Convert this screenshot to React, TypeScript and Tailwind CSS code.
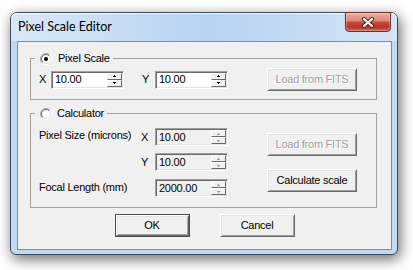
import React from "react";

const sans = "font-['Liberation_Sans',Arial,sans-serif] text-[11px] tracking-[-0.25px] leading-[13px]";

function Radio({ checked }: { checked?: boolean }) {
  return (
    <svg width="12" height="12" viewBox="0 0 12 12" className="shrink-0">
      <defs>
        <linearGradient id="rOuter" x1="0" y1="0" x2="1" y2="1">
          <stop offset="0.5" stopColor="#a0a0a0" />
          <stop offset="0.5" stopColor="#ffffff" />
        </linearGradient>
        <linearGradient id="rInner" x1="0" y1="0" x2="1" y2="1">
          <stop offset="0.5" stopColor="#696969" />
          <stop offset="0.5" stopColor="#e3e3e3" />
        </linearGradient>
      </defs>
      <circle cx="6" cy="6" r="5.5" fill="none" stroke="url(#rOuter)" />
      <circle cx="6" cy="6" r="4.5" fill="#fff" stroke="url(#rInner)" />
      {checked && <circle cx="6" cy="6" r="2" fill="#000" />}
    </svg>
  );
}

function Arrow({ up, disabled }: { up?: boolean; disabled?: boolean }) {
  const c = disabled ? "#a0a0a0" : "#000";
  return (
    <svg width="3" height="2" viewBox="0 0 3 2" shapeRendering="crispEdges">
      {up ? (
        <>
          <rect x="1" y="0" width="1" height="1" fill={c} />
          <rect x="0" y="1" width="3" height="1" fill={c} />
        </>
      ) : (
        <>
          <rect x="0" y="0" width="3" height="1" fill={c} />
          <rect x="1" y="1" width="1" height="1" fill={c} />
        </>
      )}
    </svg>
  );
}

const raised =
  "border border-t-white border-l-white border-b-[#696969] border-r-[#696969] bg-[#f0f0f0]";

function SpinBox({ value, disabled }: { value: string; disabled?: boolean }) {
  return (
    <div
      className={`w-[73px] h-[18px] shrink-0 flex p-[1px] border border-t-[#a0a0a0] border-l-[#a0a0a0] border-b-white border-r-white shadow-[inset_1px_1px_0_#696969,inset_-1px_-1px_0_#e3e3e3] ${
        disabled ? "bg-[#f0f0f0]" : "bg-white"
      }`}
    >
      <div className="flex-1 flex items-center pl-[2px] text-black">{value}</div>
      <div className="w-[15px] flex flex-col">
        <div className={`flex-1 flex items-center justify-center ${raised}`}>
          <Arrow up disabled={disabled} />
        </div>
        <div className={`flex-1 flex items-center justify-center ${raised}`}>
          <Arrow disabled={disabled} />
        </div>
      </div>
    </div>
  );
}

function Btn({
  label,
  disabled,
  def,
  w = "w-[90px]",
}: {
  label: string;
  disabled?: boolean;
  def?: boolean;
  w?: string;
}) {
  return (
    <div className={`${w} h-[23px] ${def ? "border border-[#4a4a4a]" : ""}`}>
      <div
        className={`h-full w-full flex items-center justify-center ${raised} shadow-[inset_1px_1px_0_#e3e3e3,inset_-1px_-1px_0_#a0a0a0]`}
      >
        <span className={disabled ? "text-[#a0a0a0] [text-shadow:1px_1px_0_#fff]" : "text-black"}>
          {label}
        </span>
      </div>
    </div>
  );
}

function CloseButton() {
  return (
    <div className="-mt-[1px] mr-[6px] w-[46px] h-[20px] rounded-b-[4px] border border-[#6b2b27] bg-[linear-gradient(180deg,#eaaea0_0%,#da8a7a_42%,#c74a3a_52%,#b83425_78%,#cf6550_100%)] shadow-[inset_0_0_0_1px_rgba(255,255,255,0.3)] flex items-center justify-center">
      <svg width="14" height="11" viewBox="0 0 14 11">
        <path d="M3 2 L11 9 M11 2 L3 9" stroke="#4a2624" strokeWidth="4.2" strokeLinecap="round" />
        <path d="M3 2 L11 9 M11 2 L3 9" stroke="#ffffff" strokeWidth="2.2" strokeLinecap="round" />
      </svg>
    </div>
  );
}

export default function App() {
  return (
    <div className="w-[413px] h-[270px] bg-white pt-[12px] pl-[10px] overflow-hidden">
      <div className="w-[388px] h-[243px] rounded-t-[7px] rounded-b-[6px] border border-[#3e4a59] bg-[#c1daf4] flex flex-col shadow-[2px_4px_14px_rgba(0,0,0,0.6)]">
        <div className="h-[28px] shrink-0 flex items-start justify-between rounded-t-[6px] bg-[linear-gradient(90deg,#d9e8f8_0%,#c9def5_25%,#b6d3f2_50%,#c4dbf4_75%,#d3e5f7_100%)] shadow-[inset_0_1px_0_rgba(255,255,255,0.8)]">
          <span className="pl-[7px] pt-[6px] font-['Lato','Noto_Sans',sans-serif] text-[12.5px] leading-[16px] text-black">
            Pixel Scale Editor
          </span>
          <CloseButton />
        </div>
        <div className={`ml-[6px] mr-[5px] mb-[4px] flex-1 border border-[#7a8ea8] bg-[#f0f0f0] flex flex-col ${sans}`}>
          <fieldset className="ml-[12px] mt-[10px] w-[347px] border border-[#a0a0a0] pl-[4px]">
            <legend className="pl-[5px] pr-[3px]">
              <div className="flex items-center gap-[6px] h-[13px]">
                <Radio checked />
                <span>Pixel Scale</span>
              </div>
            </legend>
            <div className="flex items-center h-[23px] mt-[3px] mb-[8px]">
              <span className="ml-[4px] w-[12px]">X</span>
              <SpinBox value="10.00" />
              <span className="ml-[18px] w-[13px]">Y</span>
              <SpinBox value="10.00" />
              <div className="ml-[39px]">
                <Btn label="Load from FITS" disabled />
              </div>
            </div>
          </fieldset>

          <fieldset className="ml-[12px] mt-[7px] w-[347px] border border-[#a0a0a0] pl-[4px]">
            <legend className="pl-[5px] pr-[3px]">
              <div className="flex items-center gap-[5px] h-[13px]">
                <Radio />
                <span>Calculator</span>
              </div>
            </legend>
            <div className="flex pb-[10px]">
              <div className="flex flex-col pl-[4px] pt-[8px]">
                <div className="flex items-center h-[18px]">
                  <span className="w-[102px] mb-[4px]">Pixel Size (microns)</span>
                  <span className="w-[14px]">X</span>
                  <SpinBox value="10.00" disabled />
                </div>
                <div className="flex items-center h-[18px] mt-[7px]">
                  <span className="w-[102px]" />
                  <span className="w-[14px]">Y</span>
                  <SpinBox value="10.00" disabled />
                </div>
                <div className="flex items-center h-[18px] mt-[8px]">
                  <span className="w-[116px] mb-[2px]">Focal Length (mm)</span>
                  <SpinBox value="2000.00" disabled />
                </div>
              </div>
              <div className="ml-[39px] pt-[13px] flex flex-col gap-[13px]">
                <Btn label="Load from FITS" disabled />
                <Btn label="Calculate scale" />
              </div>
            </div>
          </fieldset>

          <div className="mt-[6px] flex justify-center gap-[30px]">
            <Btn label="OK" def w="w-[75px]" />
            <Btn label="Cancel" w="w-[75px]" />
          </div>
        </div>
      </div>
    </div>
  );
}
